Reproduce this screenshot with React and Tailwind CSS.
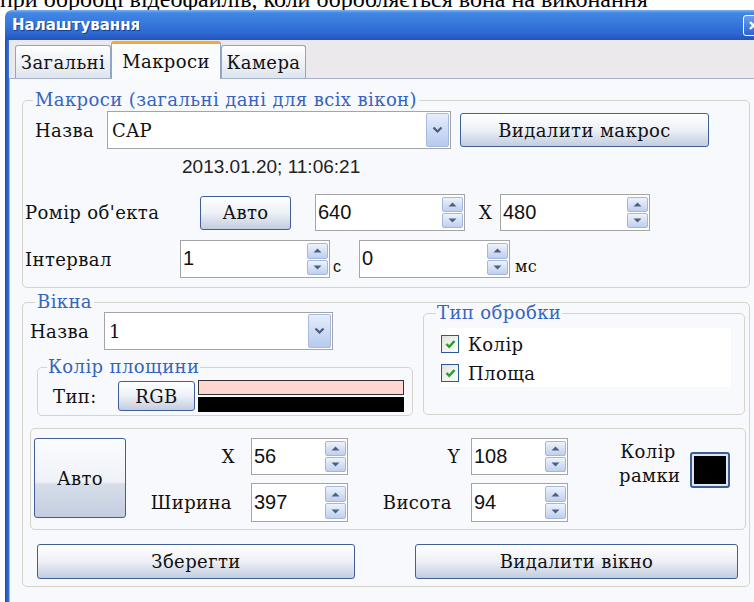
import React from 'react';

const SERIF = "font-['DejaVu_Serif','Liberation_Serif',serif] tracking-[0.4px]";
const SANS = "font-['Liberation_Sans',Arial,sans-serif]";

// small filled arrow used on spin buttons
function Tri({ up }) {
  return (
    <svg width="9" height="5" viewBox="0 0 9 5">
      <path d={up ? 'M0.5 4.5 L4.5 0.5 L8.5 4.5 Z' : 'M0.5 0.5 L4.5 4.5 L8.5 0.5 Z'} fill="#4f5f80" />
    </svg>
  );
}

function SpinBtn({ up }) {
  return (
    <div className="flex-1 flex items-center justify-center rounded-[2px] border border-[#a3b6dc] bg-gradient-to-b from-[#eef3fc] to-[#bfcfee]">
      <Tri up={up} />
    </div>
  );
}

function Spin({ value, className }) {
  return (
    <div className={`flex border border-[#a5a5a5] bg-white ${className}`}>
      <span className={`flex-1 flex items-center pl-[2px] pb-[2px] text-[20px] leading-[24px] text-[#111] ${SANS}`}>{value}</span>
      <div className="w-[22px] flex flex-col gap-px py-[2px] pr-px">
        <SpinBtn up />
        <SpinBtn />
      </div>
    </div>
  );
}

function Combo({ value, className }) {
  return (
    <div className={`flex border border-[#a5a5a5] bg-white ${className}`}>
      <span className={`flex-1 flex items-center pl-[4px] text-[18px] text-[#111] ${SERIF}`}>{value}</span>
      <div className="m-px w-[23px] flex items-center justify-center rounded-[2px] border border-[#a7badf] bg-gradient-to-b from-[#e6edfb] to-[#b7caee]">
        <svg width="11" height="8" viewBox="0 0 11 8">
          <path d="M1.5 1.5 L5.5 5.5 L9.5 1.5" fill="none" stroke="#4a5a7c" strokeWidth="2.2" />
        </svg>
      </div>
    </div>
  );
}

function Btn({ children, className }) {
  return (
    <div className={`flex items-center justify-center rounded-[3px] border border-[#3f5f95] bg-gradient-to-b from-[#ffffff] via-[#edf0f6] to-[#c2cde0] text-[18px] text-[#111] ${SERIF} ${className}`}>
      {children}
    </div>
  );
}

function Check({ label }) {
  return (
    <div className="flex items-center h-[18px]">
      <div className="w-[18px] h-[18px] flex items-center justify-center border border-[#2a5a8c] bg-gradient-to-br from-[#e2e2dc] to-[#ffffff]">
        <svg width="11" height="10" viewBox="0 0 11 10">
          <path d="M1.5 5 L4.2 7.8 L9.5 2" fill="none" stroke="#21a121" strokeWidth="2.4" />
        </svg>
      </div>
      <span className={`ml-[9px] text-[18px] text-[#111] ${SERIF}`}>{label}</span>
    </div>
  );
}

const LEGEND = `text-[18px] leading-[20px] text-[#3564c0] ${SERIF}`;
const LABEL = `text-[18px] text-[#111] ${SERIF}`;

export default function App() {
  return (
    <div className="w-[754px] h-[602px] overflow-hidden bg-white">
      {/* tail of the document line above the dialog */}
      <div className="h-[10px] overflow-hidden">
        <p className="-mt-[15px] whitespace-nowrap font-['Liberation_Serif',serif] text-[24px] leading-[28px] text-black">
          при обробці відеофайлів, коли обробляється вона на виконання
        </p>
      </div>

      <div className="ml-[5px] w-[770px] flex flex-col">
        {/* title bar */}
        <div className="h-[30px] flex items-center rounded-t-[7px] bg-[linear-gradient(#7db2f2_0%,#4287e4_10%,#3677dc_45%,#2d66d0_80%,#2452bb_100%)]">
          <span className="ml-[7px] font-['DejaVu_Sans',sans-serif] font-bold text-[15px] text-white [text-shadow:1px_1px_0_#1b3f8f]">
            Налаштування
          </span>
          <div className="ml-auto mr-[11px] w-[21px] h-[21px] flex items-center justify-center rounded-[3px] border border-white bg-gradient-to-b from-[#6a9ff0] to-[#2e62d0]">
            <svg width="11" height="11" viewBox="0 0 11 11">
              <path d="M2 2 L9 9 M9 2 L2 9" stroke="#fff" strokeWidth="2.4" />
            </svg>
          </div>
        </div>

        <div className="flex h-[562px]">
          <div className="w-[4px] bg-[linear-gradient(90deg,#1d48b4,#3a74dc)]" />
          <div className="flex-1 flex flex-col bg-[#ece9ec]">
            {/* tabs */}
            <div className="h-[38px] flex items-end pl-[6px]">
              <div className={`w-[96px] h-[33px] flex items-center justify-center rounded-t-[3px] border border-b-0 border-[#93a5c4] bg-gradient-to-b from-[#ffffff] to-[#dfe5ee] ${LABEL}`}>
                Загальні
              </div>
              <div className={`relative z-10 -mb-px w-[110px] h-[38px] flex items-center justify-center rounded-t-[3px] border-x border-[#93a5c4] border-t-[3px] border-t-[#f2a93b] bg-[#fafbfd] ${LABEL}`}>
                Макроси
              </div>
              <div className={`w-[85px] h-[33px] flex items-center justify-center rounded-t-[3px] border border-b-0 border-[#93a5c4] bg-gradient-to-b from-[#ffffff] to-[#dfe5ee] ${LABEL}`}>
                Камера
              </div>
            </div>

            {/* tab page */}
            <div className="flex-1 border-t border-l border-[#a4b1c6] bg-[#f8f9fc]">
              <fieldset className="ml-[12px] mt-[11px] w-[728px] rounded-[5px] border border-[#d6d3ca] pb-[9px]">
                <legend className={`ml-[10px] px-[2px] ${LEGEND}`}>Макроси (загальні дані для всіх вікон)</legend>

                <div className="mt-[1px] h-[38px] flex items-center">
                  <span className={`ml-[12px] w-[72px] ${LABEL}`}>Назва</span>
                  <Combo value="CAP" className="w-[344px] h-[38px]" />
                  <Btn className="ml-[9px] w-[249px] h-[34px]">Видалити макрос</Btn>
                </div>

                <div className={`mt-[8px] ml-[159px] h-[20px] leading-[20px] text-[19px] text-[#222] ${SANS}`}>
                  2013.01.20; 11:06:21
                </div>

                <div className="mt-[17px] h-[37px] flex items-center">
                  <span className={`ml-[2px] w-[175px] ${LABEL}`}>Ромір об'екта</span>
                  <Btn className="w-[91px] h-[34px]">Авто</Btn>
                  <Spin value="640" className="ml-[24px] w-[150px] h-[37px]" />
                  <span className={`w-[35px] pl-[14px] ${LABEL}`}>X</span>
                  <Spin value="480" className="w-[150px] h-[37px]" />
                </div>

                <div className="mt-[9px] h-[38px] flex items-center">
                  <span className={`ml-[2px] w-[155px] ${LABEL}`}>Інтервал</span>
                  <Spin value="1" className="w-[150px] h-[38px]" />
                  <span className={`self-end mb-[2px] w-[29px] pl-[3px] text-[16px] leading-[18px] text-[#111] ${SANS}`}>с</span>
                  <Spin value="0" className="w-[151px] h-[38px]" />
                  <span className={`self-end mb-[2px] ml-[5px] text-[16px] leading-[18px] text-[#111] ${SERIF}`}>мс</span>
                </div>
              </fieldset>

              <fieldset className="ml-[12px] mt-[4px] w-[728px] rounded-[5px] border border-[#d6d3ca] pb-[7px]">
                <legend className={`ml-[12px] px-[2px] ${LEGEND}`}>Вікна</legend>

                <div className="flex items-start">
                  <div className="w-[400px] flex flex-col">
                    <div className="h-[38px] flex items-center">
                      <span className={`ml-[7px] w-[74px] ${LABEL}`}>Назва</span>
                      <Combo value="1" className="w-[229px] h-[38px]" />
                    </div>
                    <fieldset className="mt-[7px] ml-[14px] w-[376px] rounded-[5px] border border-[#d6d3ca]">
                      <legend className={`ml-[9px] px-[1px] ${LEGEND}`}>Колір площини</legend>
                      <div className="h-[38px] flex items-center">
                        <span className={`ml-[15px] w-[65px] ${LABEL}`}>Тип:</span>
                        <Btn className="w-[77px] h-[30px]">RGB</Btn>
                        <div className="ml-[3px] w-[206px] flex flex-col">
                          <div className="h-[15px] border border-[#333] bg-[#ffd6d0]" />
                          <div className="mt-[2px] h-[15px] bg-black" />
                        </div>
                      </div>
                    </fieldset>
                  </div>

                  <fieldset className="-mt-[9px] w-[322px] rounded-[5px] border border-[#d6d3ca] pb-[27px]">
                    <legend className={`ml-[12px] px-[1px] ${LEGEND}`}>Тип обробки</legend>
                    <div className="ml-[16px] mt-[5px] w-[291px] h-[59px] bg-white flex flex-col gap-[11px] pt-[7px] pl-px">
                      <Check label="Колір" />
                      <Check label="Площа" />
                    </div>
                  </fieldset>
                </div>

                <div className="mt-[12px] ml-[7px] w-[716px] rounded-[5px] border border-[#d6d3ca] flex items-start pb-[7px]">
                  <div className={`ml-[3px] mt-[9px] w-[92px] h-[80px] flex items-center justify-center rounded-[3px] border border-[#3f5f95] bg-[linear-gradient(#fbfcfe_0%,#eef1f7_55%,#d7dee9_58%,#c3cde0_100%)] text-[18px] text-[#111] ${SERIF}`}>
                    Авто
                  </div>

                  <div className="mt-[9px] flex flex-col gap-[8px]">
                    <div className="h-[37px] flex items-center">
                      <span className={`w-[109px] text-right ${LABEL}`}>X</span>
                      <Spin value="56" className="ml-[16px] w-[97px] h-[37px]" />
                    </div>
                    <div className="h-[39px] flex items-center">
                      <span className={`w-[109px] pr-[3px] text-right ${LABEL}`}>Ширина</span>
                      <Spin value="397" className="ml-[16px] w-[97px] h-[39px]" />
                    </div>
                  </div>

                  <div className="mt-[9px] flex flex-col gap-[8px]">
                    <div className="h-[37px] flex items-center">
                      <span className={`w-[112px] text-right ${LABEL}`}>Y</span>
                      <Spin value="108" className="ml-[11px] w-[97px] h-[37px]" />
                    </div>
                    <div className="h-[39px] flex items-center">
                      <span className={`w-[112px] pr-[8px] text-right ${LABEL}`}>Висота</span>
                      <Spin value="94" className="ml-[11px] w-[97px] h-[39px]" />
                    </div>
                  </div>

                  <div className={`ml-[51px] mt-[11px] w-[58px] text-center leading-[24px] ${LABEL}`}>
                    Колір
                    <br />
                    рамки
                  </div>
                  <div className="ml-[13px] mt-[23px] w-[40px] h-[36px] rounded-[3px] border-2 border-[#3d5d94] bg-[#dfe6f2] p-[2px]">
                    <div className="w-full h-full bg-black" />
                  </div>
                </div>

                <div className="mt-[14px] flex">
                  <Btn className="ml-[14px] w-[318px] h-[35px]">Зберегти</Btn>
                  <Btn className="ml-[60px] w-[323px] h-[35px]">Видалити вікно</Btn>
                </div>
              </fieldset>
            </div>
          </div>
        </div>
      </div>
    </div>
  );
}
